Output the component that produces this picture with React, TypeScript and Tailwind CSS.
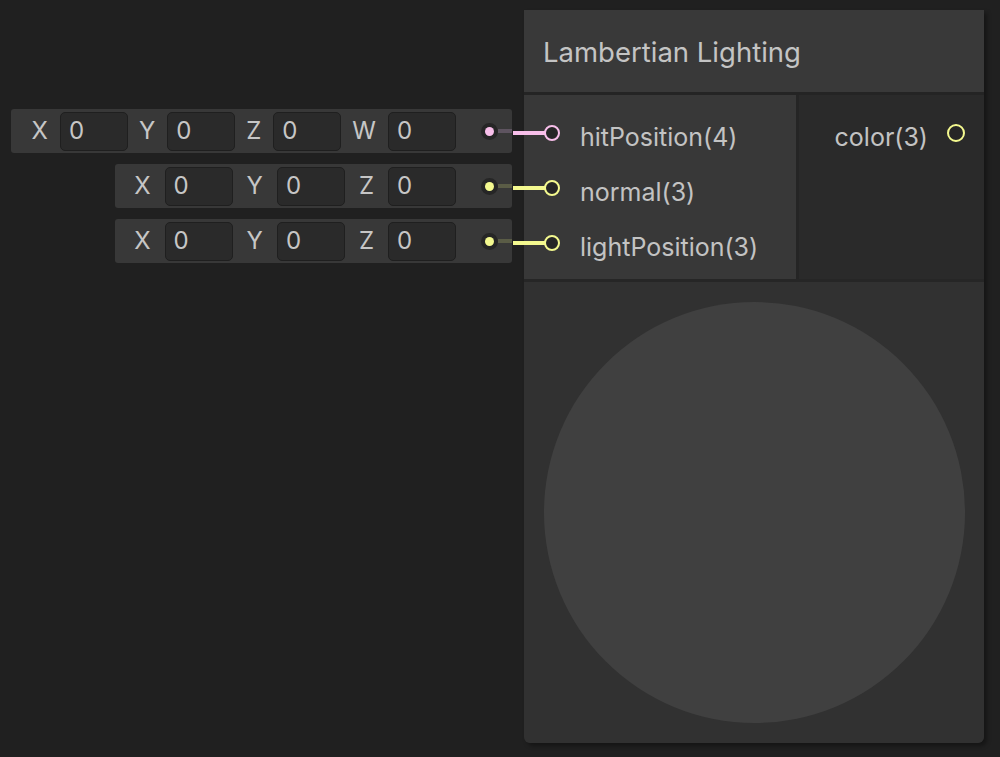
const PINK = '#f8bfea'
const YELLOW = '#f4f98f'

type Field = { label: string }

interface FieldRowProps {
  fields: Field[]
  width: string
  gap: string
  color: string
  stub: string
}

// inline vector field: label + number box, port dot on the right
function FieldRow({ fields, width, gap, color, stub }: FieldRowProps) {
  return (
    <div className={`flex items-center justify-end h-[44px] bg-[#383838] rounded-[3px] ${width}`}>
      {fields.map((f) => (
        <div key={f.label} className={`flex items-center ${gap}`}>
          <span className="text-[24px] text-[#c6c6c6] leading-none">{f.label}</span>
          <div className="w-[68px] h-[39px] rounded-[5px] bg-[#2a2a2a] border border-[#1f1f1f] flex items-center pl-[8px]">
            <span className="text-[24px] text-[#c6c6c6] leading-none">0</span>
          </div>
        </div>
      ))}
      <div className="ml-[25px] w-[17px] h-[17px] rounded-full bg-[#262626] flex items-center justify-center">
        <div className="w-[9px] h-[9px] rounded-full" style={{ background: color }} />
      </div>
      <div className="w-[14px] h-[4px]" style={{ background: stub }} />
    </div>
  )
}

interface PortProps {
  name: string
  color: string
}

function InputPort({ name, color }: PortProps) {
  return (
    <div className="relative flex items-center h-[55px] pl-[20px]">
      {/* wire coming in from the inline field */}
      <div className="absolute left-[-11px] top-1/2 -translate-y-1/2 w-[32px] h-[4px]" style={{ background: color }} />
      <div
        className="relative w-[16px] h-[16px] rounded-full bg-[#262626] border-2"
        style={{ borderColor: color }}
      />
      <span className="ml-[20px] mt-[9px] text-[25px] text-[#c3c3c3] leading-none">{name}</span>
    </div>
  )
}

export default function App() {
  return (
    <div
      className="w-[1000px] h-[757px] bg-[#202020] flex overflow-hidden"
      style={{ fontFamily: 'Inter, "Noto Sans", sans-serif' }}
    >
      {/* inline fields column */}
      <div className="w-[524px] flex flex-col items-end pr-[12px] pt-[109px] gap-[11px]">
        <FieldRow
          width="w-[501px]"
          gap="gap-[12px] ml-[11px]"
          color={PINK}
          stub="#5e5460"
          fields={[{ label: 'X' }, { label: 'Y' }, { label: 'Z' }, { label: 'W' }]}
        />
        <FieldRow
          width="w-[397px]"
          gap="gap-[14px] ml-[14px]"
          color={YELLOW}
          stub="#5a5c46"
          fields={[{ label: 'X' }, { label: 'Y' }, { label: 'Z' }]}
        />
        <FieldRow
          width="w-[397px]"
          gap="gap-[14px] ml-[14px]"
          color={YELLOW}
          stub="#5a5c46"
          fields={[{ label: 'X' }, { label: 'Y' }, { label: 'Z' }]}
        />
      </div>

      {/* node */}
      <div className="mt-[10px] w-[460px] h-[733px] flex flex-col bg-[#232323] rounded-b-[6px] shadow-[3px_3px_4px_rgba(0,0,0,0.35)]">
        <div className="h-[82px] bg-[#393939] flex items-center pl-[19px] border-b-[3px] border-[#242424] box-content">
          <span className="mt-[3px] text-[27.5px] text-[#c4c4c4] leading-none">Lambertian Lighting</span>
        </div>

        <div className="h-[184px] flex">
          <div className="w-[272px] bg-[#383838] pt-[10px]">
            <InputPort name="hitPosition(4)" color={PINK} />
            <InputPort name="normal(3)" color={YELLOW} />
            <InputPort name="lightPosition(3)" color={YELLOW} />
          </div>
          <div className="w-[3px] bg-[#252525]" />
          <div className="flex-1 bg-[#2a2a2a] pt-[10px]">
            <div className="flex items-center justify-end h-[55px] pr-[19px]">
              <span className="mt-[9px] text-[25px] text-[#c3c3c3] leading-none">color(3)</span>
              <div
                className="ml-[19px] w-[18px] h-[18px] rounded-full bg-[#262626] border-2"
                style={{ borderColor: YELLOW }}
              />
            </div>
          </div>
        </div>

        <div className="h-[3px] bg-[#262626]" />

        <div className="flex-1 bg-[#313131] rounded-b-[6px] flex items-center justify-center">
          <div className="w-[421px] h-[421px] rounded-full bg-[#404040]" />
        </div>
      </div>
    </div>
  )
}
